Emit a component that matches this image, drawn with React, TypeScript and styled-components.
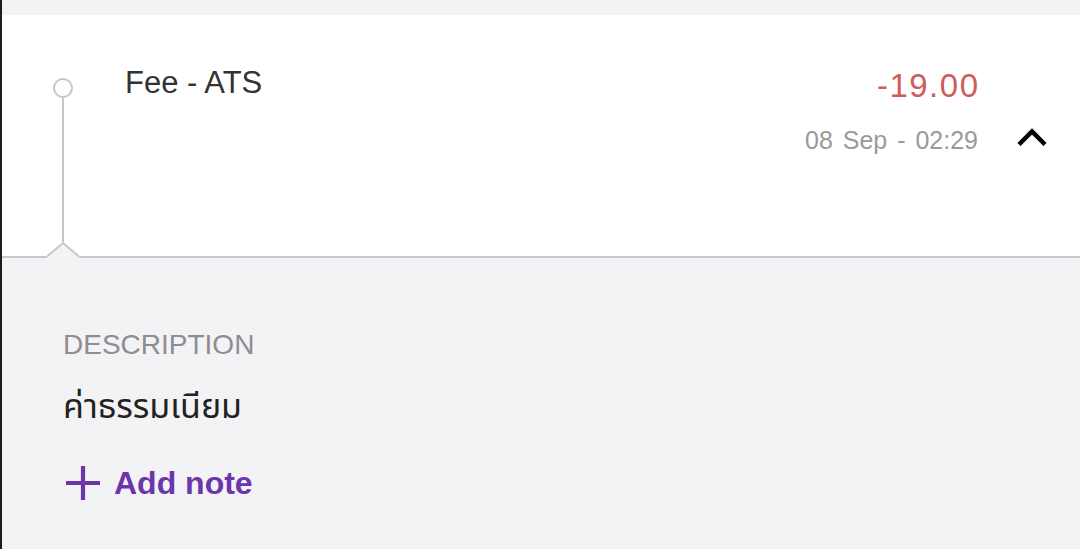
import React from "react";
import styled, { createGlobalStyle } from "styled-components";

const GlobalStyle = createGlobalStyle`
  html, body {
    margin: 0;
    padding: 0;
    background: #f3f2f5;
  }
  body {
    font-family: "Liberation Sans", Arial, "Noto Sans", sans-serif;
  }
`;

const Page = styled.div`
  box-sizing: border-box;
  width: 1080px;
  height: 549px;
  overflow: hidden;
  background: #f3f2f5;
  border-left: 2px solid #1c1c1e;
  padding-top: 15px;
`;

const Card = styled.div`
  position: relative;
  box-sizing: border-box;
  height: 243px;
  background: #ffffff;
  border-bottom: 2px solid #c9c7cc;
  display: flex;
  align-items: stretch;
  padding: 50px 34px 14px 51px;
`;

const Timeline = styled.div`
  width: 20px;
  margin-top: 13px;
  display: flex;
  flex-direction: column;
  align-items: center;
`;

const Dot = styled.div`
  box-sizing: border-box;
  width: 20px;
  height: 20px;
  border-radius: 50%;
  border: 2.5px solid #c6c6c6;
  flex-shrink: 0;
`;

const Stem = styled.div`
  width: 2px;
  flex: 1;
  background: #c6c6c6;
`;

const Notch = styled.svg`
  position: absolute;
  left: 45px;
  bottom: -2px;
`;

const Title = styled.div`
  margin-left: 52px;
  flex: 1;
  font-size: 31px;
  line-height: 36px;
  color: #333333;
`;

const Summary = styled.div`
  display: grid;
  grid-template-columns: auto 30px;
  column-gap: 38px;
  align-content: start;
  align-items: center;
`;

const Amount = styled.div`
  grid-column: 1;
  text-align: right;
  font-size: 33px;
  line-height: 40px;
  letter-spacing: 1.5px;
  margin-right: -1.5px;
  margin-top: 1px;
  color: #cf5b5b;
`;

const Stamp = styled.div`
  grid-column: 1;
  margin-top: 19px;
  text-align: right;
  font-size: 25px;
  line-height: 30px;
  word-spacing: 3px;
  color: #9a9a9a;
`;

const Toggle = styled.svg`
  grid-column: 2;
  margin-top: 13px;
  display: block;
`;

const Details = styled.div`
  padding: 70px 0 0 61px;
`;

const Label = styled.div`
  font-size: 28px;
  line-height: 34px;
  color: #8e8d92;
`;

const Body = styled.div`
  margin-top: 24px;
  font-family: "Noto Sans Thai", "Noto Sans", "DejaVu Sans", sans-serif;
  font-size: 34px;
  line-height: 44px;
  color: #222222;
`;

const NoteButton = styled.button`
  margin: 34px 0 0 2px;
  padding: 0;
  border: 0;
  background: transparent;
  display: flex;
  align-items: center;
  gap: 13px;
  font-family: "Liberation Sans", Arial, sans-serif;
  font-size: 32px;
  font-weight: 700;
  line-height: 38px;
  color: #6b35ab;
  cursor: pointer;
`;

export default function App() {
  return (
    <>
      <GlobalStyle />
      <Page>
        <Card>
          <Timeline>
            <Dot />
            <Stem />
          </Timeline>
          <Title>Fee - ATS</Title>
          <Summary>
            <Amount>-19.00</Amount>
            <Stamp>08 Sep - 02:29</Stamp>
            <Toggle width="32" height="19" viewBox="0 0 32 19">
              <polyline
                points="3,16.5 16,3.5 29,16.5"
                fill="none"
                stroke="#000"
                strokeWidth="4.5"
              />
            </Toggle>
          </Summary>
          <Notch width="32" height="16" viewBox="0 0 32 16">
            <polygon points="0,14 16,0 32,14 32,16 0,16" fill="#f3f2f5" />
            <polyline
              points="0,14.5 16,1 32,14.5"
              fill="none"
              stroke="#c9c7cc"
              strokeWidth="2"
            />
          </Notch>
        </Card>
        <Details>
          <Label>DESCRIPTION</Label>
          <Body>ค่าธรรมเนียม</Body>
          <NoteButton>
            <svg width="36" height="36" viewBox="0 0 36 36">
              <path d="M18 1v34M1 18h34" stroke="#6b35ab" strokeWidth="4.2" />
            </svg>
            Add note
          </NoteButton>
        </Details>
      </Page>
    </>
  );
}
